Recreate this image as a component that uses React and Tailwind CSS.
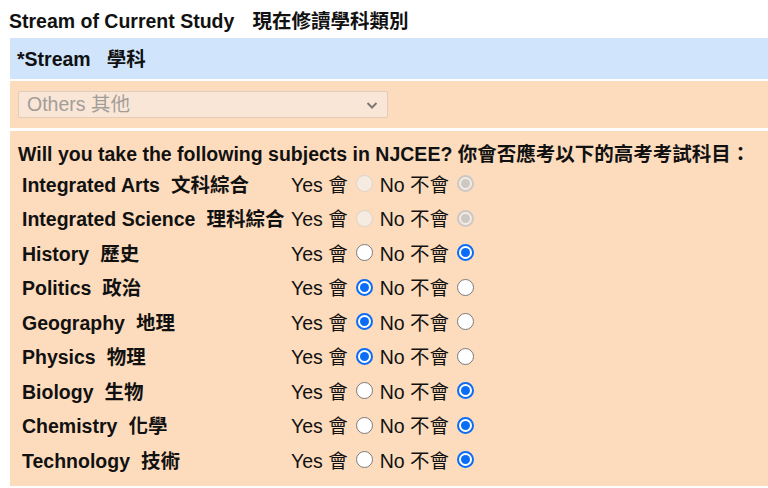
import React from 'react';

const subjects = [
  { en: 'Integrated Arts', zh: '文科綜合', value: 'no', disabled: true },
  { en: 'Integrated Science', zh: '理科綜合', value: 'no', disabled: true },
  { en: 'History', zh: '歷史', value: 'no' },
  { en: 'Politics', zh: '政治', value: 'yes' },
  { en: 'Geography', zh: '地理', value: 'yes' },
  { en: 'Physics', zh: '物理', value: 'yes' },
  { en: 'Biology', zh: '生物', value: 'no' },
  { en: 'Chemistry', zh: '化學', value: 'no' },
  { en: 'Technology', zh: '技術', value: 'no' },
];

const Radio = ({ checked, disabled }) => {
  if (disabled) {
    return checked ? (
      <span className="mb-[3px] flex h-[17px] w-[17px] items-center justify-center rounded-full border-2 border-[#cdc8c4] bg-[#f4ebe3]">
        <span className="block h-[9px] w-[9px] rounded-full bg-[#cdc8c4]" />
      </span>
    ) : (
      <span className="mb-[3px] block h-[17px] w-[17px] rounded-full border border-[#ddd2c8] bg-[#f6ebe1]" />
    );
  }
  return checked ? (
    <span className="mb-[3px] flex h-[17px] w-[17px] items-center justify-center rounded-full border-2 border-[#0b6cf5] bg-white">
      <span className="block h-[9px] w-[9px] rounded-full bg-[#0b6cf5]" />
    </span>
  ) : (
    <span className="mb-[3px] block h-[17px] w-[17px] rounded-full border border-[#7a7a7a] bg-white" />
  );
};

const App = () => {
  return (
    <div
      className="h-[488px] w-[768px] overflow-hidden bg-white text-[19.5px] leading-none text-[#111]"
      style={{ fontFamily: '"Liberation Sans", "Noto Sans CJK TC", sans-serif' }}
    >
      <div className="flex h-[38px] items-center pl-[9px] pt-[6px] font-bold">
        Stream of Current Study<span className="ml-[18px]">現在修讀學科類別</span>
      </div>
      <div className="ml-[10px] flex h-[41px] items-center bg-[#d0e5fc] pl-[7px] pt-[2px] font-bold">
        *Stream<span className="ml-[16px]">學科</span>
      </div>
      <div className="ml-[10px] mt-[2px] flex h-[47px] items-center bg-[#fddcbd] pl-[8px]">
        <div className="flex h-[27px] w-[370px] items-center justify-between rounded-[2px] border border-[#e2cdbb] bg-[#f9e6d7] pl-[8px] pr-[8px] text-[#a39d98]">
          <span>Others 其他</span>
          <svg width="14" height="14" viewBox="0 0 14 14" className="mt-[1px]">
            <path d="M2.5 5 L7 9.5 L11.5 5" fill="none" stroke="#7d7873" strokeWidth="2" />
          </svg>
        </div>
      </div>
      <div className="ml-[10px] mt-[3px] h-[355px] bg-[#fddcbd] pt-[13px]">
        <div className="flex h-[22px] items-center pl-[8px] font-bold">
          Will you take the following subjects in NJCEE? 你會否應考以下的高考考試科目：
        </div>
        <div className="mt-[2px] pl-[12px]">
          {subjects.map((s) => (
            <div key={s.en} className="flex h-[34.5px] items-center">
              <div className="w-[269px] font-bold">
                {s.en}
                <span className="ml-[11px]">{s.zh}</span>
              </div>
              <span>Yes 會</span>
              <span className="ml-[8px] flex">
                <Radio checked={s.value === 'yes'} disabled={s.disabled} />
              </span>
              <span className="ml-[7px]">No 不會</span>
              <span className="ml-[8px] flex">
                <Radio checked={s.value === 'no'} disabled={s.disabled} />
              </span>
            </div>
          ))}
        </div>
      </div>
    </div>
  );
};

export default App;
